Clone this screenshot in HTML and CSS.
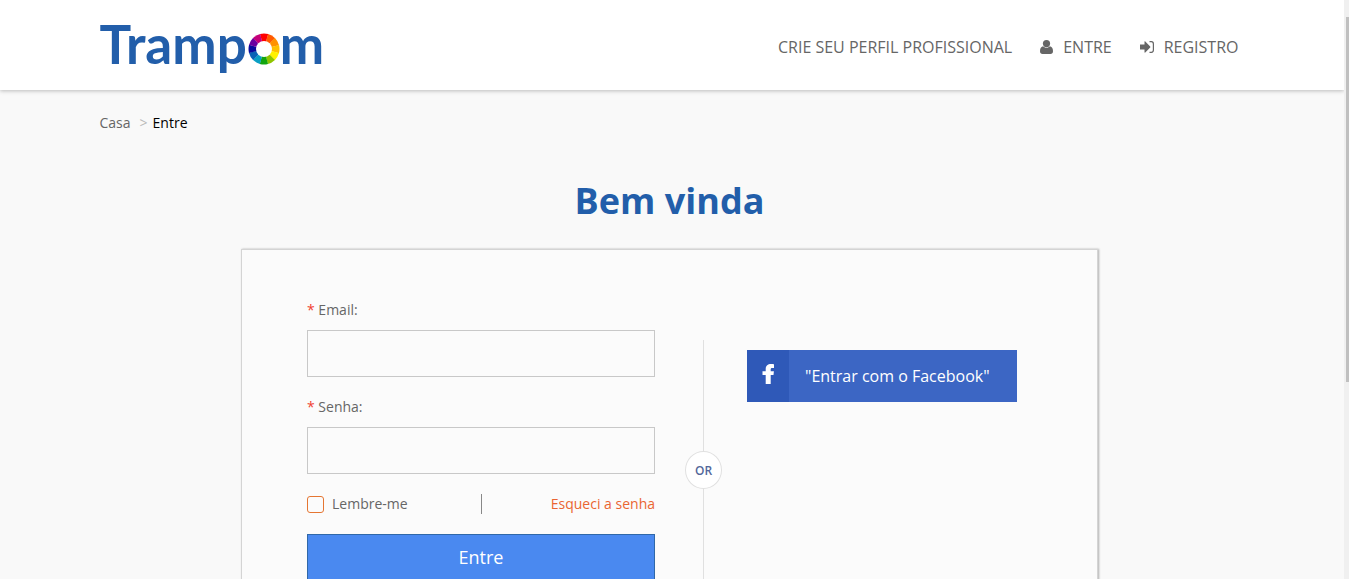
FILE: index.html
```html
<!DOCTYPE html>
<html lang="pt">
<head>
    <meta charset="UTF-8">
    <meta name="viewport" content="width=device-width, initial-scale=1.0">
    <title>Entre - Trampom</title>
    <link rel="stylesheet" href="styles.css">
</head>
<body>
    <header class="header">
        <div class="container header-inner">
            <a href="#" class="logo">
                <span>Tramp</span>
                <svg class="logo-wheel" viewBox="-16 -16 32 32" role="img" aria-label="o">
                    <g id="wheel"></g>
                    <circle r="8" fill="#fff"/>
                </svg>
                <span>m</span>
            </a>
            <nav class="nav">
                <a href="#">Crie seu perfil profissional</a>
                <a href="#">
                    <svg class="icon-user" width="13" height="14" viewBox="0 0 13 14"><circle cx="6.500" cy="3.600" r="3.600"/><path d="M3 6.300C.8 6.800 0 8.900 0 11.300 0 13 1 14 2.500 14h8c1.500 0 2.500-1 2.500-2.700 0-2.400-.8-4.500-3-5-.9.900-2.100 1.500-3.500 1.500S3.900 7.200 3 6.300z"/></svg>
                    Entre
                </a>
                <a href="#">
                    <svg class="icon-login" width="14" height="12" viewBox="0 0 14 12"><path d="M0 3.500h4.500V.8c0-.4.500-.6.800-.3l4.900 5c.3.300.3.700 0 1l-4.900 5c-.3.300-.8.100-.8-.3V8.500H0z"/><path d="M9.500.7h1.900c1.300 0 2 .9 2 2.200v6.200c0 1.300-.7 2.200-2 2.200H9.500" fill="none" stroke="currentColor" stroke-width="1.200"/></svg>
                    Registro
                </a>
            </nav>
        </div>
    </header>

    <main class="container">
        <div class="breadcrumb">
            <a href="#">Casa</a>
            <span class="arrow">&gt;</span>
            <span class="current">Entre</span>
        </div>

        <h1>Bem vinda</h1>

        <div class="login-box">
            <form class="login-form">
                <label for="email"><span class="required">*</span> Email:</label>
                <input type="email" id="email" class="text-input">
                <label for="password"><span class="required">*</span> Senha:</label>
                <input type="password" id="password" class="text-input">
                <div class="options">
                    <label class="remember" for="remember"><input type="checkbox" id="remember"> Lembre-me</label>
                    <span class="separator"></span>
                    <a href="#" class="forgot">Esqueci a senha</a>
                </div>
                <button type="submit" class="btn-login">Entre</button>
            </form>

            <div class="divider"><span>OR</span></div>

            <div class="social">
                <button type="button" class="btn-facebook">
                    <span class="fb-icon">
                        <svg width="12" height="20" viewBox="0 0 12 20"><path d="M12 .2v3.800h-1.800C8.900 4 8.700 4.600 8.700 5.500v1.700h3.200L11.500 11H8.700v9H3.700v-9H.5V7.200h3.200V4.800C3.700 1.700 5.900 0 8.900 0 10.300 0 11.600.1 12 .2z" fill="#fff"/></svg>
                    </span>
                    <span class="fb-text">"Entrar com o Facebook"</span>
                </button>
            </div>
        </div>
    </main>

    <div class="scrollbar" aria-hidden="true"><div class="thumb"></div></div>

    <script>
        // colour wheel of the logo, clockwise from the top
        const colors = ["#ff0000", "#ff5a00", "#ff9100", "#ffc000", "#fff200", "#8fc400",
            "#12a50e", "#0a9fc4", "#0a62b5", "#0a0a9c", "#6a00a0", "#c4007a"];
        const wheel = document.getElementById('wheel');

        colors.forEach((color, i) => {
            const a = (i * 30 - 105) * Math.PI / 180;
            const b = (i * 30 - 74) * Math.PI / 180;
            const slice = document.createElementNS('http://www.w3.org/2000/svg', 'path');
            slice.setAttribute('d', `M0 0L${15.5 * Math.cos(a)} ${15.5 * Math.sin(a)}A15.5 15.5 0 0 1 ${15.5 * Math.cos(b)} ${15.5 * Math.sin(b)}Z`);
            slice.setAttribute('fill', color);
            wheel.appendChild(slice);
        });
    </script>
</body>
</html>
```
FILE: styles.css
```css
* {
    box-sizing: border-box;
}
html {
    scrollbar-width: none;
}
body {
    margin: 0;
    padding-right: 10px;
    font-family: "Open Sans", sans-serif;
    font-size: 14px;
    line-height: 20px;
    color: #666;
    background-color: #f9f9f9;
}
a {
    color: inherit;
    text-decoration: none;
}
button {
    font-family: inherit;
    cursor: pointer;
}
.container {
    max-width: 1140px;
    margin: 0 auto;
}

/* header */
.header {
    margin-right: -5px;
    padding-right: 5px;
    background-color: #fff;
    box-shadow: 0 1px 4px rgba(0,0,0,0.25);
}
.header + .container {
    padding-bottom: 40px;
}
.header-inner {
    display: flex;
    justify-content: space-between;
    align-items: center;
    height: 90px;
}
.logo {
    display: flex;
    align-items: center;
    padding-bottom: 3px;
    font-family: Lato, sans-serif;
    font-size: 53px;
    font-weight: 700;
    line-height: 60px;
    color: #225eaa;
}
.logo-wheel {
    width: 32px;
    height: 32px;
    margin: 10px 0 0 1px;
}
.nav {
    display: flex;
    gap: 28px;
    font-size: 16px;
    text-transform: uppercase;
    padding: 4px 1px 0 0;
}
.nav a {
    display: flex;
    align-items: center;
    gap: 10px;
}
.nav svg {
    fill: currentColor;
}

.breadcrumb {
    display: flex;
    gap: 5px;
    padding-top: 23px;
}
.breadcrumb .arrow {
    color: #bbb;
    padding-left: 4px;
}
.breadcrumb .current {
    color: #000;
    font-weight: 500;
}
h1 {
    margin: 43px 0 23px;
    font-size: 36px;
    line-height: 50px;
    text-align: center;
    color: #225eaa;
}

/* login box */
.login-box {
    display: flex;
    max-width: 857px;
    margin: 0 auto;
    padding: 50px 65px;
    border: 1px solid #d4d4d4;
    background-color: #fbfbfb;
    box-shadow: 1px 0 2px rgba(0,0,0,0.3);
}
.login-form {
    display: flex;
    flex-direction: column;
    flex: 0 1 348px;
}
.required {
    color: #f04030;
}
.text-input {
    width: 100%;
    height: 47px;
    margin: 10px 0 20px;
    padding: 0 12px;
    border: 1px solid #c8c8c8;
    background-color: #fbfbfb;
    font-size: 14px;
}
.options {
    display: flex;
    justify-content: space-between;
    margin-bottom: 20px;
}
.options > * {
    flex: 1;
}
.remember {
    display: flex;
    align-items: center;
    gap: 8px;
}
.remember input {
    appearance: none;
    width: 17px;
    height: 17px;
    margin: 0;
    border: 1px solid #e57632;
    border-radius: 3px;
}
.remember input:checked {
    background-color: #e57632;
}
.options .separator {
    flex: 0 0 1px;
    background-color: #888;
}
.forgot {
    color: #ea6532;
    text-align: right;
}
.btn-login {
    height: 47px;
    padding: 0 0 2px;
    border: 1px solid #3068a8;
    background-color: #4a89f0;
    color: #fff;
    font-size: 18px;
}
.divider {
    display: flex;
    flex-direction: column;
    align-items: center;
    width: 37px;
    height: 260px;
    margin: 40px 25px 0 30px;
}
.divider::before,
.divider::after {
    content: "";
    flex: 1;
    width: 1px;
    background-color: #e0e0e0;
}
.divider span {
    width: 37px;
    height: 38px;
    border: 1px solid #e0e0e0;
    border-radius: 50%;
    background-color: #fff;
    color: #53679b;
    font-size: 12px;
    font-weight: 600;
    line-height: 37px;
    text-align: center;
}
.social {
    flex: 1;
    padding-top: 50px;
}
.btn-facebook {
    display: flex;
    width: 270px;
    height: 52px;
    padding: 0;
    border: none;
    background-color: #3c66c4;
    color: #fff;
    font-size: 16px;
}
.fb-icon {
    display: flex;
    align-items: center;
    justify-content: center;
    width: 42px;
    height: 100%;
    padding-bottom: 4px;
    background-color: #2f59b8;
}
.fb-text {
    padding-left: 16px;
    line-height: 52px;
}

/* page scrollbar */
.scrollbar {
    position: fixed;
    top: 0;
    right: 0;
    bottom: 0;
    width: 5px;
    padding: 17px 0 0 2px;
    background-color: #f0f0f0;
}
.scrollbar .thumb {
    height: 65%;
    background-color: #c0c0c0;
}
```
